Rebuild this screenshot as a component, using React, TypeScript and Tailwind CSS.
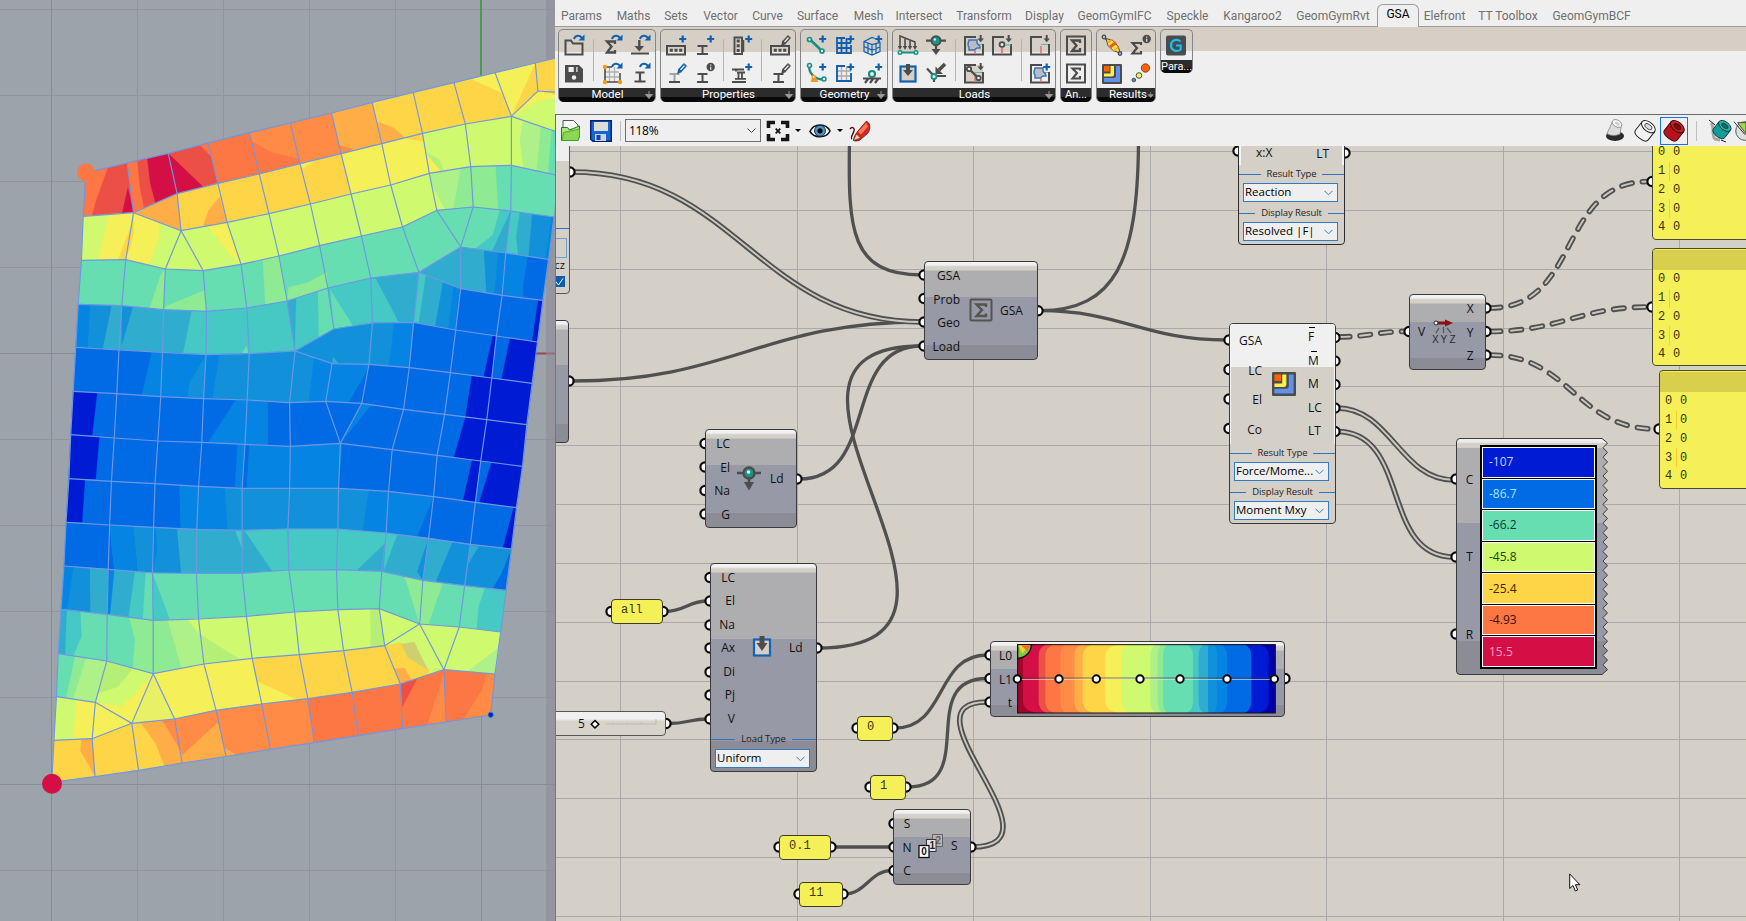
import type { ReactNode } from "react";

/* ---------- analysis mesh ---------- */

const C = {
  b0: "#001bd4", b1: "#006be4", b2: "#0684e4", b3: "#1291da", b4: "#30adce",
  t1: "#46c8c4", t2: "#66deb2", g1: "#8eeb94", g2: "#adf188", g3: "#cff96f", g4: "#b6ef76",
  y1: "#f6f058", y2: "#ffd548", o1: "#ffae47", o2: "#ff8b47", o3: "#fc7744", r1: "#ec4f46", r2: "#d40f46",
};

const FACES: [string, string][] = [
  [C.o3, "240,398 356,369 374,518 233,529"],
  [C.r1, "302,384 356,369 374,518 258,527 268,485"],
  [C.r2, "358,443 374,518 342,520"],
  [C.r2, "356,369 471,340 496,461 374,518"],
  [C.r1, "356,369 412,356 420,430 435,490 374,518"],
  [C.o3, "356,369 384,362 391,440 403,504 374,518"],
  [C.r1, "471,340 583,309 610,430 496,461"],
  [C.r2, "471,340 570,442 496,461"],
  [C.o3, "560,316 583,309 592,350"],
  [C.o3, "583,309 698,278 726,402 610,430"],
  [C.o2, "698,278 813,249 840,371 726,402"],
  [C.o3, "704,303 762,338 838,357 840,371 726,402"],
  [C.o2, "813,249 928,219 955,341 840,371"],
  [C.o1, "928,219 1042,187 1069,311 955,341"],
  [C.o2, "947,315 990,328 955,341"],
  [C.y2, "1042,187 1157,157 1271,128 1386,98 1432,229 1303,252 1183,280 1069,311"],
  [C.o1, "1058,246 1100,262 1133,292 1069,311"],
  [C.y1, "1320,117 1386,98 1405,158"],
  [C.y1, "1386,98 1499,69 1506,153 1432,229"],
  [C.y2, "1499,69 1506,153 1432,229"],
  [C.y2, "1499,69 1560,53 1560,157 1506,153"],
  [C.g3, "1506,153 1560,157 1560,276 1432,229"],
  [C.y1, "1506,153 1560,157 1560,170 1500,186 1432,229"],
  [C.y2, "1520,155 1560,157 1560,166"],

  [C.g3, "233,529 374,518 352,659 228,661"],
  [C.y1, "305,523 374,518 352,659 274,661"],
  [C.y2, "366,560 352,659 330,660"],
  [C.g3, "374,518 507,572 463,687 352,659"],
  [C.y1, "374,518 445,548 445,590 418,675 352,659"],
  [C.y2, "374,518 374,580 365,620 352,659"],
  [C.o1, "374,518 496,461 507,572"],
  [C.y2, "496,461 610,430 636,547 507,572"],
  [C.o1, "615,470 636,547 568,560 584,510"],
  [C.g3, "507,572 463,687 569,692"],
  [C.g3, "507,572 636,547 675,673 569,692"],
  [C.y1, "582,558 636,547 675,673 650,650"],
  [C.y2, "610,430 726,402 840,371 955,341 983,462 869,492 753,521 636,547"],
  [C.y1, "840,371 885,360 848,385"],
  [C.y1, "955,341 1069,311 1183,280 1202,400 1094,435 983,462"],
  [C.g3, "1183,280 1303,252 1432,229 1432,376 1318,380 1202,400"],
  [C.y2, "1130,293 1183,280 1186,305"],
  [C.g4, "1190,335 1232,360 1242,393 1202,400"],
  [C.y1, "1190,335 1215,370 1235,393 1202,400"],
  [C.g2, "1432,229 1560,276 1560,406 1432,376"],
  [C.g3, "1432,229 1465,241 1455,300 1465,384 1432,376"],
  [C.g1, "1515,258 1560,276 1560,406 1503,393"],
  [C.t2, "1545,268 1560,276 1560,406 1535,400"],

  [C.g3, "636,547 753,521 869,492 983,462 1094,435 1202,400 1223,511 1127,561 1012,588 895,617 781,648 675,673"],
  [C.g2, "1202,400 1318,380 1325,501 1223,511"],
  [C.g3, "1207,430 1245,508 1223,511"],
  [C.g1, "1290,384 1318,380 1325,501 1270,505"],
  [C.g1, "1318,380 1432,376 1430,513 1325,501"],
  [C.t2, "1388,378 1432,376 1430,513 1395,509"],
  [C.t2, "1432,376 1560,406 1551,531 1430,513"],

  [C.t2, "228,661 352,659 463,687 569,692 675,673 781,648 895,617 1012,588 1127,561 1223,511 1325,501 1430,513 1551,531 1536,658 1416,639 1290,621 1173,697 1038,714 918,744 804,783 691,804 578,814 458,809 341,797 219,793"],
  [C.g1, "463,687 450,705 418,806 458,809"],
  [C.g1, "575,750 578,814 458,809 465,798"],
  [C.g1, "736,660 781,648 804,783 743,794"],
  [C.g1, "915,697 918,744 804,783 808,742 860,728"],
  [C.t1, "1400,510 1430,513 1416,639 1330,626 1380,585"],
  [C.b4, "1430,513 1416,639 1378,633"],
  [C.b4, "1430,513 1551,531 1536,658 1416,639"],
  [C.t1, "1430,513 1455,517 1445,590 1450,643 1416,639"],
  [C.b3, "1490,522 1551,531 1536,658 1480,649"],
  [C.b2, "1545,530 1551,531 1536,658 1528,657"],

  [C.b4, "1173,697 1290,621 1290,746"],
  [C.b4, "1290,621 1416,639 1406,766 1290,746"],
  [C.b3, "1355,630 1416,639 1406,766 1362,758"],
  [C.b2, "1395,638 1416,639 1406,766 1385,760"],
  [C.b2, "1416,639 1536,658 1520,781 1406,766"],
  [C.b1, "1478,650 1536,658 1520,781 1465,773 1465,735"],

  [C.b3, "219,793 341,797 333,930 212,922"],
  [C.b2, "219,793 252,795 245,924 212,922"],
  [C.b4, "313,796 341,797 333,930 288,927"],
  [C.b4, "341,797 458,809 455,937 333,930"],
  [C.b3, "341,797 372,800 341,915"],
  [C.b4, "458,809 578,814 577,944 455,937"],
  [C.t1, "537,812 578,814 577,944 513,940"],
  [C.t1, "578,814 691,804 804,783 826,933 698,941 577,944"],
  [C.t2, "690,918 698,941 677,939"],
  [C.t1, "804,783 918,744 935,867 826,933"],
  [C.b4, "804,783 829,775 826,890 826,933"],
  [C.t2, "890,754 918,744 935,867 893,893"],
  [C.t1, "918,744 1038,714 1043,849 935,867"],
  [C.t2, "925,750 988,857 935,867"],
  [C.b4, "1038,714 1173,697 1158,847 1043,849"],
  [C.t1, "1038,714 1052,716 1117,848 1043,849"],
  [C.b3, "1173,697 1290,746 1276,870 1158,847"],
  [C.b4, "1173,697 1240,725 1218,858 1158,847"],
  [C.t1, "1173,697 1192,706 1172,850 1158,847"],
  [C.b2, "1270,740 1290,746 1276,870 1255,866"],

  [C.b1, "212,922 333,930 455,937 577,944 698,941 826,933 935,867 1043,849 1158,847 1276,870 1290,746 1406,766 1520,781 1505,906 1432,1527 1317,1513 1200,1495 1081,1479 946,1467 806,1467 678,1471 551,1468 430,1462 307,1455 185,1447"],
  [C.b0, "1507,780 1520,781 1505,906 1490,903"],
  [C.b2, "425,935 577,944 570,1076 397,1067"],
  [C.b3, "577,944 570,1076 525,1074 530,1030"],
  [C.b2, "577,944 698,941 692,1080 570,1076"],
  [C.b3, "615,943 698,941 826,933 811,1088 692,1080 595,1077"],
  [C.b3, "826,933 930,971 912,1084 811,1088"],
  [C.b2, "880,952 930,971 912,1084 865,1086"],
  [C.b3, "826,933 935,867 1043,849 1033,973 930,971"],
  [C.b4, "933,950 947,970 930,971"],
  [C.b2, "930,971 1033,973 1013,1090 912,1084"],
  [C.b1, "1033,985 1013,1090 975,1088"],
  [C.b3, "1043,849 1158,847 1146,983 1033,973"],
  [C.b2, "1105,848 1158,847 1146,983 1088,978"],
  [C.b0, "1380,888 1390,888 1377,1014 1354,1010"],
  [C.b0, "1428,895 1505,906 1490,1030 1404,1018"],
  [C.b0, "1321,1008 1377,1014 1490,1030 1475,1154 1463,1279 1346,1263 1271,1252 1303,1132"],
  [C.b0, "1322,1261 1346,1263 1331,1387 1297,1380"],
  [C.b1, "1346,1265 1374,1270 1340,1387 1331,1387"],
  [C.b0, "1376,1268 1463,1279 1446,1403 1342,1387"],
  [C.b0, "1438,1403 1446,1403 1432,1527 1408,1523"],
  [C.b0, "205,1054 272,1059 258,1186 198,1184"],
  [C.b0, "198,1184 278,1190 268,1317 193,1316"],
  [C.b0, "193,1316 238,1320 230,1447 185,1447"],
  [C.b2, "660,1080 750,1083 750,1216 582,1208"],
  [C.b2, "1013,1090 1040,1094 953,1210"],
  [C.b2, "665,1212 813,1219 953,1210 958,1215 948,1345 658,1343"],
  [C.b1, "685,1215 697,1216 690,1345 678,1345"],
  [C.b2, "503,1335 678,1345 948,1345 1088,1354 1214,1370 1168,1490 1081,1479 946,1467 678,1471 505,1466"],
  [C.b3, "630,1342 678,1345 811,1345 948,1345 1033,1350 1015,1473 946,1467 806,1467 678,1471 637,1470"],

  [C.b4, "307,1455 430,1462 551,1468 678,1471 806,1467 946,1467 1081,1479 1200,1495 1317,1513 1432,1527 1417,1651 1301,1637 1184,1621 1069,1594 942,1589 809,1590 678,1600 550,1600 427,1599 303,1588"],
  [C.b1, "185,1447 307,1455 320,1588 303,1588 179,1578"],
  [C.b2, "307,1455 375,1459 387,1595 320,1590"],
  [C.b3, "375,1459 495,1466 507,1600 387,1595"],
  [C.b2, "428,1462 436,1462 440,1530 427,1599"],
  [C.t1, "684,1471 806,1467 946,1467 1081,1479 1078,1510 1000,1589 809,1590 762,1592"],
  [C.t1, "658,1471 676,1471 680,1530"],
  [C.t1, "1081,1479 1112,1484 1075,1590"],
  [C.b3, "1200,1495 1184,1621 1168,1595"],
  [C.b3, "1267,1507 1317,1513 1432,1527 1417,1651 1301,1637 1220,1625"],
  [C.b4, "1317,1516 1340,1520 1312,1570"],
  [C.b1, "1432,1527 1417,1651 1380,1645 1405,1600"],

  [C.t2, "179,1578 303,1588 427,1599 550,1600 678,1600 809,1590 942,1589 1069,1594 1184,1621 1301,1637 1417,1651 1402,1776 1286,1761 1175,1752 1062,1706 946,1709 825,1716 690,1729 556,1737 429,1741 300,1723 171,1708"],
  [C.b3, "179,1578 303,1588 300,1723 171,1708"],
  [C.b2, "179,1578 205,1580 188,1710 171,1708"],
  [C.b4, "252,1584 303,1588 300,1723 253,1717"],
  [C.b4, "303,1588 427,1599 429,1741 300,1723"],
  [C.b2, "303,1588 320,1590 308,1724 300,1723"],
  [C.t1, "378,1595 427,1599 429,1741 360,1730"],
  [C.t2, "408,1597 427,1599 427,1740 400,1737"],
  [C.t1, "427,1599 475,1738 429,1741"],
  [C.g1, "1133,1610 1184,1621 1240,1628 1200,1752 1175,1752"],
  [C.t1, "1358,1645 1417,1651 1402,1776 1335,1768 1340,1700"],

  [C.t2, "171,1708 300,1723 429,1741 429,1901 299,1863 163,1841"],
  [C.t1, "171,1708 225,1714 228,1790 205,1848 163,1841"],
  [C.b4, "171,1708 187,1710 182,1843 163,1841"],
  [C.g1, "362,1732 429,1741 429,1901 372,1885 378,1800"],
  [C.g1, "429,1741 556,1737 571,1872 429,1901"],
  [C.g2, "470,1740 556,1737 571,1872 508,1885"],
  [C.g3, "525,1738 556,1737 562,1790"],
  [C.g3, "556,1737 690,1729 825,1716 946,1709 1062,1706 1175,1752 1077,1817 962,1832 838,1844 706,1855 571,1872"],
  [C.g4, "556,1780 670,1857 571,1872"],
  [C.g4, "1037,1707 1062,1706 1077,1817 1038,1822"],
  [C.g3, "1175,1752 1286,1761 1402,1776 1386,1902 1243,1889"],
  [C.g4, "1160,1765 1178,1755 1198,1798 1170,1785"],
  [C.g2, "1398,1822 1386,1902 1308,1896"],

  [C.g1, "163,1841 299,1863 267,1987 158,1970"],
  [C.t2, "163,1841 210,1848 185,1972 158,1970"],
  [C.g2, "240,1856 299,1863 267,1987 205,1978"],
  [C.g3, "299,1863 429,1901 369,2050 267,1987"],
  [C.g4, "299,1863 371,1886 330,1940 275,1960"],
  [C.y1, "429,1901 369,2050 267,1987 340,2000 375,1965"],
  ["#e8f065", "429,1901 489,2037 369,2050"],
  [C.y1, "429,1901 571,1872 706,1855 733,1992 605,2011 489,2037"],
  [C.y2, "706,1855 838,1844 962,1832 1077,1817 1121,1932 986,1957 862,1976 733,1992"],
  [C.y1, "722,1925 832,1979 733,1992"],
  [C.g3, "1077,1817 1175,1752 1243,1889 1121,1932"],
  [C.y2, "1077,1817 1125,1808 1140,1850 1203,1888 1200,1905 1121,1932"],
  ["#d0cf70", "1125,1812 1160,1806 1198,1890 1140,1850"],
  [C.o1, "1105,1886 1133,1884 1152,1920 1121,1932"],

  [C.g3, "158,1970 267,1987 258,2096 151,2101"],
  [C.y1, "215,1980 267,1987 369,2050 258,2096 205,2098"],
  [C.y2, "151,2101 258,2096 369,2050 388,2191 266,2210 145,2227"],
  [C.o1, "228,2098 258,2096 266,2210 225,2132"],
  [C.o1, "369,2050 489,2037 605,2011 633,2150 510,2169 388,2191"],
  [C.y2, "369,2050 395,2050 435,2110 460,2178 388,2191"],
  [C.o2, "455,2041 489,2037 510,2140"],
  [C.o2, "489,2037 605,2011 612,2045 510,2145"],
  [C.o2, "605,2011 733,1992 862,1976 880,2108 757,2128 633,2150"],
  [C.o1, "630,2125 660,2144 633,2150"],
  [C.o3, "862,1976 986,1957 1121,1932 1243,1889 1386,1902 1374,2025 1249,2046 1127,2066 1003,2087 880,2108"],
  [C.r1, "1121,1932 1168,1916 1127,2000"],
  [C.o2, "1243,1900 1249,2046 1197,2054"],
  [C.o2, "1362,1900 1386,1902 1374,2025 1297,2038 1350,1950"],
];

const EDGES = [
  "M240 398L356 369 471 340 583 309 698 278 813 249 928 219 1042 187 1157 157 1271 128 1386 98 1499 69 1560 53",
  "M240 398L233 529 228 661 219 793 212 922 205 1054 198 1184 193 1316 185 1447 179 1578 171 1708 163 1841 158 1970 151 2101 145 2227",
  "M145 2227L266 2210 388 2191 510 2169 633 2150 757 2128 880 2108 1003 2087 1127 2066 1249 2046 1374 2025",
  "M1551 531L1536 658 1520 781 1505 906 1490 1030 1475 1154 1463 1279 1446 1403 1432 1527 1417 1651 1402 1776 1386 1902 1374 2025",
  "M233 529L374 518 496 461 610 430 726 402 840 371 955 341 1069 311 1183 280 1303 252 1432 229 1506 153 1560 157",
  "M374 518L507 572 636 547 753 521 869 492 983 462 1094 435 1202 400 1318 380 1432 376 1560 406M1432 229L1560 276",
  "M228 661L352 659 463 687 569 692 675 673 781 648 895 617 1012 588 1127 561 1223 511 1325 501 1430 513 1551 531",
  "M219 793L341 797 458 809 578 814 691 804 804 783 918 744 1038 714 1173 697 1290 621 1416 639 1536 658",
  "M1173 697L1290 746 1406 766 1520 781",
  "M212 922L333 930 455 937 577 944 698 941 826 933 935 867 1043 849 1158 847 1276 870 1390 888 1505 906",
  "M826 933L930 971 1033 973 1146 983 1261 998 1377 1014 1490 1030",
  "M205 1054L327 1061 450 1070 570 1076 692 1080 811 1088 912 1084 1013 1090 1130 1108 1245 1123 1363 1139 1475 1154",
  "M198 1184L320 1194 442 1203 565 1207 686 1213 813 1219 953 1210 1098 1229 1224 1246 1346 1263 1463 1279",
  "M193 1316L312 1324 434 1331 556 1339 678 1345 811 1345 948 1345 1088 1354 1214 1370 1331 1387 1446 1403",
  "M185 1447L307 1455 430 1462 551 1468 678 1471 806 1467 946 1467 1081 1479 1200 1495 1317 1513 1432 1527",
  "M179 1578L303 1588 427 1599 550 1600 678 1600 809 1590 942 1589 1069 1594 1184 1621 1301 1637 1417 1651",
  "M171 1708L300 1723 429 1741 556 1737 690 1729 825 1716 946 1709 1062 1706 1175 1752 1286 1761 1402 1776",
  "M163 1841L299 1863 429 1901 571 1872 706 1855 838 1844 962 1832 1077 1817 1175 1752 1243 1889 1386 1902",
  "M158 1970L267 1987 369 2050 489 2037 605 2011 733 1992 862 1976 986 1957 1121 1932 1243 1889 1286 1761",
  "M151 2101L258 2096 369 2050",
  "M356 369L374 518 352 659 341 797 333 930 327 1061 320 1194 312 1324 307 1455 303 1588 300 1723 299 1863 267 1987 258 2096 266 2210",
  "M471 340L496 461 507 572 463 687 458 809 455 937 450 1070 442 1203 434 1331 430 1462 427 1599 429 1741 429 1901 369 2050 388 2191",
  "M507 572L569 692 578 814 577 944 570 1076 565 1207 556 1339 551 1468 550 1600 556 1737 571 1872 605 2011 633 2150",
  "M429 1901L489 2037 510 2169",
  "M583 309L610 430 636 547 675 673 691 804 698 941 692 1080 686 1213 678 1345 678 1471 678 1600 690 1729 706 1855 733 1992 757 2128",
  "M698 278L726 402 753 521 781 648 804 783 826 933 811 1088 813 1219 811 1345 806 1467 809 1590 825 1716 838 1844 862 1976 880 2108",
  "M813 249L840 371 869 492 895 617 918 744 935 867M930 971L912 1084 953 1210 948 1345 946 1467 942 1589 946 1709 962 1832 986 1957 1003 2087",
  "M928 219L955 341 983 462 1012 588 1038 714 1043 849 1033 973 1013 1090 953 1210",
  "M1042 187L1069 311 1094 435 1127 561 1173 697 1158 847 1146 983 1130 1108 1098 1229 1088 1354 1081 1479 1069 1594 1062 1706 1077 1817 1121 1932 1127 2066",
  "M1157 157L1183 280 1202 400 1223 511 1290 621 1290 746 1276 870 1261 998 1245 1123 1224 1246 1214 1370 1200 1495 1184 1621 1175 1752",
  "M1271 128L1303 252 1318 380 1325 501 1290 621",
  "M1386 98L1432 229 1432 376 1430 513 1416 639 1406 766 1390 888 1377 1014 1363 1139 1346 1263 1331 1387 1317 1513 1301 1637 1286 1761",
  "M1499 69L1506 153M1243 1889L1249 2046",
];

function Viewport() {
  return (
    <div className="relative h-[921px] w-[555px] shrink-0 overflow-hidden bg-[#9da3aa]">
      <svg width="555" height="921" className="block">
        <g stroke="#9494a0" strokeWidth="1">
          {[137.5, 223.5, 309.5, 395.5].map((x) => <path key={x} d={`M${x} 0V921`} />)}
          {[9.5, 95.5, 181.5, 267.5, 439.5, 525.5, 611.5, 697.5, 870.5].map((y) => <path key={y} d={`M0 ${y}H555`} />)}
        </g>
        <path d="M51.5 0V921M481.5 0V921M0 353.5H555M0 784.5H555" stroke="#888a95" />
        <path d="M481 0V80" stroke="#4a9a4c" strokeWidth="2" />
        <path d="M530 353.5H555" stroke="#9c4448" strokeWidth="2" />
        <rect x="546" y="0" width="9" height="921" fill="#8d8c98" opacity=".6" />
        <g transform="translate(0 40) scale(.357143 .333333)">
          {FACES.map(([fill, points], i) => (
            <polygon key={i} points={points} fill={fill} stroke={fill} strokeWidth=".6" />
          ))}
          <g fill="none" stroke="#6f97e4" strokeWidth="1.15">
            {EDGES.map((d, i) => <path key={i} d={d} vectorEffect="non-scaling-stroke" />)}
          </g>
        </g>
        <circle cx="86" cy="172.5" r="9" fill="#fc7744" />
        <circle cx="52" cy="783.8" r="10" fill="#d40f46" />
        <circle cx="490.7" cy="714.8" r="2.6" fill="#001bd4" stroke="#1f8fb0" strokeWidth=".8" />
      </svg>
    </div>
  );
}

/* ---------- ribbon icons ---------- */

const D = "#4c4c4c";
const B = "#0f60ae";
const T = "#189080";

const Ic = ({ children }: { children: ReactNode }) => (
  <svg width="28" height="28" viewBox="0 0 28 28" fill="none" stroke={D} strokeWidth="2" className="block shrink-0">{children}</svg>
);
const Plus = () => <path d="M20.700 3.500v7M17.200 7h7" stroke={B} strokeWidth="2.200" />;
const Turn = () => (
  <>
    <path d="M14 7c1-4 6-4.500 8-1" stroke={B} strokeWidth="2" />
    <path d="M24.500 2.500v6h-6z" fill={B} stroke="none" />
  </>
);
const Pencil = ({ c = D }: { c?: string }) => (
  <>
    <path d="M17 9.500l5-5.500 2 2-5 5.500z" stroke={c} strokeWidth="1.400" fill="#e8e8e8" />
    <path d="M16.500 8.500l3.500 3.500-5 2z" fill={c} stroke="none" />
  </>
);
const Beam = ({ top = D }: { top?: string }) => (
  <>
    <path d="M7.500 14h10M12.500 14v8" stroke={top} />
    <path d="M7 22h11" />
  </>
);
const Info = () => (
  <>
    <circle cx="20.700" cy="7" r="4.200" fill={D} stroke="none" />
    <path d="M20.700 4.500v1.200M20.700 6.700v3" stroke="#ddd" strokeWidth="1.300" />
  </>
);
const DownMark = () => (
  <>
    <path d="M20.700 3v4" stroke={D} />
    <path d="M17.500 6.500h6.400l-3.200 3.800z" fill={D} stroke="none" />
  </>
);
const DotBox = () => (
  <>
    <rect x="5" y="14" width="18" height="8.500" />
    <path d="M7.800 18.200h3M12.500 18.200h3M17.200 18.200h3" strokeWidth="3" />
  </>
);
const CaseFrame = () => <path d="M16 5H5v17.500h18V12" strokeWidth="2" />;

const iModel = [
  <Ic><path d="M5.500 22V8.500h5.500l2 3h9.500V22.500H5.500z" /><Turn /></Ic>,
  <Ic><path d="M5 5h14l4 4v13.500H5z" fill={D} stroke="none" /><path d="M8.500 7h9v5h-9z" fill="#eee" stroke="none" /><circle cx="14" cy="17.500" r="2.200" fill="#eee" stroke="none" /><path d="M15 7v5" strokeWidth="2.500" /></Ic>,
];
const iModel2 = [
  <Ic><path d="M17 12V9.500H9l4.500 5L9 20.500h8V18" strokeWidth="2.300" /><Turn /></Ic>,
  <Ic><path d="M7 12h14M7 17h14M11.500 7v15M16.500 7v15" stroke="#b0b0b0" strokeWidth="1.300" /><path d="M7 7v15h15v-9M7 7h7" strokeWidth="1.600" /><g fill="#f09a1a" stroke="none"><circle cx="7" cy="7" r="2.200" /><circle cx="7" cy="22" r="2.200" /><circle cx="22" cy="22" r="2.200" /></g><Turn /></Ic>,
  <Ic><path d="M13.300 8v7" strokeWidth="2.400" /><path d="M8.500 14h9.600l-4.800 5.500z" fill={D} stroke="none" /><path d="M5 21.500h18" /><Turn /></Ic>,
  <Ic><path d="M9.500 12.500h9M14 12.500V21M8.500 21.500h11" strokeWidth="2.200" /><Turn /></Ic>,
];
const iProp = [
  <Ic><DotBox /><Plus /></Ic>,
  <Ic><Beam top="#a4a4a8" /><Pencil c={B} /></Ic>,
  <Ic><Beam /><Plus /></Ic>,
  <Ic><Beam /><Info /></Ic>,
];
const iProp2 = [
  <Ic><path d="M14 5.500H6.500v16.500H14z" strokeWidth="1.900" /><path d="M15.500 8v12" strokeWidth="1.500" /><path d="M10.200 7.500v3M10.200 12.300v3M10.200 17v3" strokeWidth="3" /><Plus /></Ic>,
  <Ic><path d="M4 9.500h12M4 22h14M9 12.500h8M8 9.500v2M10.500 13v5.500M14 13v5.500M7 18.800H18" strokeWidth="1.800" /><Plus /></Ic>,
];
const iProp3 = [<Ic><DotBox /><Pencil /></Ic>, <Ic><Beam /><Pencil /></Ic>];
const iGeo = [
  <Ic><path d="M8 7.500L20 19" stroke={T} strokeWidth="2.600" /><circle cx="7.500" cy="7.500" r="2" stroke={T} fill="#eee" strokeWidth="1.700" /><circle cx="20" cy="19" r="2" stroke={T} fill="#eee" strokeWidth="1.700" /><Plus /></Ic>,
  <Ic><path d="M7.500 5C6 12 12 20 22 19.500" stroke={T} strokeWidth="2.300" /><circle cx="7.500" cy="5.500" r="2" stroke={T} fill="#eee" strokeWidth="1.500" /><circle cx="22" cy="19" r="2" stroke={T} fill="#eee" strokeWidth="1.500" /><path d="M11.500 14l5 8h-8z" fill="#f09a1a" stroke="none" /><circle cx="11.700" cy="17" r="1.600" fill="#eee" stroke="#f09a1a" strokeWidth="1.200" /><Plus /></Ic>,
  <Ic><path d="M15 6H7v15h14v-8M7 11h14M7 16h14M11.500 6v15M16.500 6v15" stroke={B} strokeWidth="1.800" /><Plus /></Ic>,
  <Ic><path d="M7 11h14M7 16h14M11.500 6v15M16.500 6v15" stroke="#aaa" strokeWidth="1.300" /><path d="M15 6H7v15h14v-8" stroke={B} strokeWidth="1.900" /><Plus /></Ic>,
  <Ic><path d="M6 9.500l8-4 3 1M6 9.500l8 3 8-2v9l-8 3.500-8-3.500zM14 12.500V23M6 14.500l8 3.500 8-3M10 11v10.500M18 11.500v10" stroke={B} strokeWidth="1.200" /><Plus /></Ic>,
  <Ic><circle cx="14" cy="14" r="3" stroke={T} strokeWidth="2.200" /><path d="M5 18.500h18M10 19l-3 4M15 19l-3 4M20 19l-3 4" strokeWidth="2.200" /><Plus /></Ic>,
];
const iLoad = [
  <Ic><path d="M6 16V4l15 6v6M11 16V7M16 16V8" strokeWidth="1.600" /><path d="M3.800 14h4.400L6 18zM8.800 14h4.400L11 18zM13.800 14h4.400L16 18zM18.800 14h4.400L21 18z" fill={D} stroke="none" /><path d="M6 20.500h16" stroke={T} /><circle cx="6" cy="20.500" r="1.800" stroke={T} fill="#eee" strokeWidth="1.400" /><circle cx="22" cy="20.500" r="1.800" stroke={T} fill="#eee" strokeWidth="1.400" /></Ic>,
  <Ic><rect x="6.500" y="6.500" width="15" height="15" fill="#d4d0c8" stroke={B} strokeWidth="2.200" /><path d="M14 4v7" strokeWidth="4" /><path d="M9 10h10l-5 6z" fill={D} stroke="none" /></Ic>,
  <Ic><path d="M4 8.700h20M14 13v5" strokeWidth="2.300" /><circle cx="14" cy="8.700" r="4.500" fill="#14988a" strokeWidth="1.900" /><circle cx="12.800" cy="7.500" r="1.200" fill="#c8f4ee" stroke="none" /><path d="M9.500 17h9L14 23z" fill={D} stroke="none" /></Ic>,
  <Ic><path d="M5 8.500l7 7.500h12M12 16v6" strokeWidth="2.200" /><path d="M23 4l-6 6" strokeWidth="3.500" /><path d="M13.500 6.500v7.500H21z" fill={D} stroke="none" /><circle cx="12" cy="16.500" r="2.500" stroke={T} fill="#eee" strokeWidth="1.800" /></Ic>,
];
const Patch = () => <path d="M9 8h8v3c1 2 3 2 3 5h-3l-3 2H9v-3c-2-2-1-4 0-7z" fill="#b8bcc4" stroke="#3d74b8" strokeWidth="1.500" />;
const Axes = () => <><path d="M15 22v-8" stroke="#e08080" strokeWidth="1.800" /><path d="M15 12.500h7" stroke="#4ec0b0" strokeWidth="1.200" /></>;
const iLoad2 = [
  <Ic><CaseFrame /><Axes /><Patch /><DownMark /></Ic>,
  <Ic><rect x="5" y="5" width="18" height="17.500" fill="#d4d0c8" stroke="none" /><CaseFrame /><Axes /><path d="M9.500 9.500l9 8.500" strokeWidth="2.400" /><circle cx="9" cy="9" r="2.200" fill="#eee" strokeWidth="1.800" /><circle cx="18.500" cy="18" r="2.200" fill="#eee" strokeWidth="1.800" /><DownMark /></Ic>,
  <Ic><CaseFrame /><path d="M14 22v-7" stroke="#e08080" strokeWidth="2.200" /><path d="M17 13h6" stroke="#4ec0b0" strokeWidth="1.200" /><circle cx="14" cy="12.500" r="2.400" fill="#eee" strokeWidth="1.800" /><DownMark /></Ic>,
];
const iLoad3 = [
  <Ic><CaseFrame /><Axes /><DownMark /></Ic>,
  <Ic><CaseFrame /><Axes /><Patch /><Plus /></Ic>,
];
const SigmaBox = ({ flip }: { flip?: boolean }) => (
  <Ic><rect x="5" y="4.500" width="18" height="18" strokeWidth="2" />{flip ? <path d="M18 10.500V8.500h-7.500l4.500 4.500-4.500 5.500H18V16" strokeWidth="2.100" /> : <path d="M18 11V8.500h-8l4.500 5-4.500 5.500h8V16" strokeWidth="2.300" />}</Ic>
);
const Contour = () => (
  <>
    <rect x="4" y="4" width="20" height="20" rx="1" fill={D} stroke="none" />
    <path d="M6 18h9.500c2 0 2.500-1 2.500-2.500V6h4v16H6z" fill="#6390ea" stroke="none" />
    <path d="M6 13.500h6.500V6H16v8.500q0 2-2 2H6z" fill="#f8f04c" stroke="none" />
    <rect x="6" y="6" width="5.500" height="5.500" fill="#ff6000" stroke="none" />
  </>
);
const iRes = [
  <Ic><path d="M5.500 5l17 17" strokeWidth="1.500" /><path d="M8 6.500l7 2 5.500 6.500 1.500 6-7-2.500-5-5z" fill="#f8e04c" strokeWidth="1" /><path d="M9.500 10.500l5-3M15.500 19l5-4" stroke="#f8a020" strokeWidth="1.500" /><path d="M12 15l6-4.500" stroke="#ef5a1a" strokeWidth="3" /><circle cx="6" cy="5" r="1.800" fill="#b8b8b8" strokeWidth="1.200" /><circle cx="22" cy="21.500" r="1.800" fill="#7aa6ef" strokeWidth="1.200" /></Ic>,
  <Ic><Contour /></Ic>,
  <Ic><path d="M15 13V11H6.500l4.500 5-4.500 5.500H15V19" strokeWidth="2.200" /><Info /></Ic>,
  <Ic><circle cx="19.500" cy="8" r="4.200" fill="#ff6000" strokeWidth=".9" /><circle cx="13" cy="15.500" r="2.800" fill="#f8f04c" strokeWidth="1" /><circle cx="7.800" cy="20" r="1.800" fill="#4b86cf" strokeWidth="1" /></Ic>,
];

const Cells = ({ cols, icons }: { cols: string; icons: ReactNode[] }) => (
  <div className={`grid grid-flow-col grid-rows-2 ${cols}`}>
    {icons.map((ic, i) => <div key={i} className="h-7 w-7">{ic}</div>)}
  </div>
);
const Sep = () => <div className="mt-[7px] h-[42px] w-[10px] shrink-0"><div className="mx-auto h-full w-px bg-[#b4b4b6]" /></div>;

function Group({ w, title, arrow = true, small, children }: { w: string; title: string; arrow?: boolean; small?: boolean; children: ReactNode }) {
  return (
    <div className={`flex shrink-0 flex-col overflow-hidden rounded-[5px] border-x border-t border-[#85858a] bg-linear-to-b from-[#d5cfc6] ${small ? "h-11 from-50% to-50%" : "h-[73px] from-[30%] to-[30%]"} to-[#efefef] ${w}`}>
      <div className={`flex pl-px ${small ? "h-[30px]" : "h-[58px]"} pt-[2px]`}>{children}</div>
      <div className={`flex min-h-0 flex-1 items-center bg-linear-to-b from-[#2c2c2c] from-65% to-[#080808] to-65% pb-px leading-none text-white ${arrow ? "text-[11.5px]" : "text-[11px]"}`}>
        <span className={`flex-1 whitespace-nowrap text-center ${arrow ? "pl-3" : ""}`}>{title}</span>
        {arrow && (
          <svg width="11" height="8" viewBox="0 0 11 8"><path d="M5 0v4M1.500 3.500h7L5 7.500z" fill="#999" stroke="#999" strokeWidth="1" /></svg>
        )}
      </div>
    </div>
  );
}

const TABS: [string, string][] = [
  ["Params", "w-[53px]"], ["Maths", "w-[51px]"], ["Sets", "w-[34px]"], ["Vector", "w-[55px]"],
  ["Curve", "w-[39px]"], ["Surface", "w-[61px]"], ["Mesh", "w-[41px]"], ["Intersect", "w-[60px]"],
  ["Transform", "w-[70px]"], ["Display", "w-[51px]"], ["GeomGymIFC", "w-[89px]"], ["Speckle", "w-[57px]"],
  ["Kangaroo2", "w-[73px]"], ["GeomGymRvt", "w-[88px]"], ["GSA", "w-[42px]"], ["Elefront", "w-[51px]"],
  ["TT Toolbox", "w-[76px]"], ["GeomGymBCF", "w-[91px]"],
];

function Ribbon() {
  return (
    <>
      <div className="flex h-[27px] border-b border-[#9c9c9e] bg-[#efefef] font-['Roboto',sans-serif] text-[12px] text-[#6f6f6f]">
        {TABS.map(([name, w]) =>
          name === "GSA" ? (
            <div key={name} className={`${w} relative z-10 mt-1 h-[23px] shrink-0 rounded-t-md border-x border-t border-[#9c9c9e] bg-[#efefef] pt-px text-center leading-[17px] text-black`}>{name}</div>
          ) : (
            <div key={name} className={`${w} flex shrink-0 items-center justify-center whitespace-nowrap pt-[5px]`}>{name}</div>
          ),
        )}
      </div>
      <div className="h-[87px] bg-linear-to-b from-[#d5cfc6] from-[24px] to-[#efefef] to-[24px]">
        <div className="flex items-start gap-[4px] pl-[3px] pt-[2px] font-['Roboto',sans-serif]">
          <Group w="w-[98px]" title="Model">
            <Cells cols="grid-cols-1" icons={iModel} /><Sep /><Cells cols="grid-cols-2" icons={iModel2} />
          </Group>
          <Group w="w-[136px]" title="Properties">
            <Cells cols="grid-cols-2" icons={iProp} /><Sep /><Cells cols="grid-cols-1" icons={iProp2} /><Sep /><Cells cols="grid-cols-1" icons={iProp3} />
          </Group>
          <Group w="w-[88px]" title="Geometry"><Cells cols="grid-cols-3" icons={iGeo} /></Group>
          <Group w="w-[164px]" title="Loads">
            <Cells cols="grid-cols-2" icons={iLoad} /><Sep /><Cells cols="grid-cols-2" icons={iLoad2} /><Sep /><Cells cols="grid-cols-1" icons={iLoad3} />
          </Group>
          <Group w="w-[32px]" title="An..." arrow={false}><Cells cols="grid-cols-1" icons={[<SigmaBox />, <SigmaBox flip />]} /></Group>
          <Group w="w-[60px]" title="Results"><Cells cols="grid-cols-2" icons={iRes} /></Group>
          <Group w="w-[33px]" title="Para..." arrow={false} small>
            <Ic><rect x="4" y="3.500" width="20" height="20" rx="2" fill="#484c50" stroke="none" /><path d="M18.500 9.500c-4-3.500-9.500-1-9.500 4s6 7 9.700 4v-4H14" stroke="#16c0f0" strokeWidth="2.200" /></Ic>
          </Group>
        </div>
      </div>
    </>
  );
}

/* ---------- canvas toolbar ---------- */

const Drum = ({ body, top, hole, line }: { body: string; top: string; hole: string; line: string }) => (
  <g transform="rotate(38 12 12)">
    <path d="M4 6.500v10.500c0 5.500 16 5.500 16 0V6.500" fill={body} stroke={line} />
    <ellipse cx="12" cy="6.500" rx="8" ry="4.600" fill={top} stroke={line} />
    <ellipse cx="12" cy="6.500" rx="4.200" ry="2.300" fill={hole} stroke={line} strokeWidth=".7" />
  </g>
);

const Caret = ({ m }: { m: string }) => <div className={`${m} h-0 w-0 border-x-[3px] border-t-[3px] border-x-transparent border-t-black`} />;

function Toolbar() {
  return (
    <div className="flex h-[32px] shrink-0 items-center border-l border-t border-[#6c6c6c] bg-[#efefef] pl-[5px]">
      <svg width="20" height="23" viewBox="0 0 20 23"><path d="M2 9V1.500h10.500L17 6v5" fill="#fafafa" stroke="#555" /><path d="M.5 21.500V8.500h6l2 2.500 10-4v10l-1.500 4.500z" fill="#aee77c" stroke="#1e7a1a" /><path d="M1 21.500l1.500-8L18.500 10v7l-1.500 4.500z" fill="#8ad852" stroke="#3c9a28" strokeWidth=".8" /></svg>
      <svg width="22" height="22" viewBox="0 0 22 22" className="ml-[9px]"><path d="M.7.7h20.600v20.600H3l-2.300-2z" fill="#1467cf" stroke="#0a1f6e" strokeWidth="1.400" /><rect x="4" y="2" width="14" height="9" fill="#dddcd8" /><rect x="5" y="14" width="11" height="7" fill="#c8d4e8" /><rect x="6.500" y="15" width="4" height="5" fill="#1b3f9a" /></svg>
      <div className="ml-[8px] h-[20px] w-px bg-[#bdbdbd]" />
      <div className="ml-[4px] flex h-[23px] w-[136px] items-center justify-between border border-[#707070] bg-[#efefef] pl-[3px] pr-[4px] font-['Open_Sans',sans-serif] text-[12px] leading-none tracking-[-0.3px] text-black">
        118%
        <svg width="9" height="6" viewBox="0 0 9 6" fill="none" stroke="#444"><path d="M.5.5l4 4 4-4" /></svg>
      </div>
      <svg width="24" height="22" viewBox="0 0 24 22" className="ml-[5px]" fill="none" stroke="#151515"><path d="M2.500 8V2.500H9M15 2.500h6.500V8M21.500 14v5.500H15M9 19.500H2.500V14" strokeWidth="3.600" /><path d="M9.700 8.700l4.600 4.600M14.300 8.700l-4.600 4.600" strokeWidth="1.800" /></svg>
      <Caret m="ml-[5px]" />
      <svg width="22" height="16" viewBox="0 0 23 16" className="ml-[8px]"><path d="M1 8.500C5-.5 18-.5 22 8 18 16 5 16 1 8.500z" fill="#fff" stroke="#111" strokeWidth="1.700" /><circle cx="11.500" cy="7.800" r="5.700" fill="#4a98c8" stroke="#124" /><circle cx="11.500" cy="7.800" r="2.700" fill="#000" /></svg>
      <Caret m="ml-[6px]" />
      <svg width="23" height="22" viewBox="0 0 23 22" className="ml-[6px]"><path d="M1 9c2-3 5-1 4 2s-4 7-2 8" fill="none" stroke="#501010" strokeWidth="1.400" /><path d="M17.500 1l3 3c1 4 0 7-2 9.500L11 20c-3 1.500-6 1-6.500.500 0-3 2-6 4-9z" fill="#d42820" stroke="#701010" strokeWidth=".8" /><path d="M17 3l-8 9 3 2.500 7-8z" fill="#ff7858" /><path d="M4.500 20.500l3-6.500 4 4z" fill="#f0d0a8" stroke="#502010" strokeWidth=".5" /></svg>

      <div className="ml-auto flex items-center">
        <svg width="22" height="24" viewBox="0 0 22 24" className="mb-[2px]"><ellipse cx="11" cy="18" rx="9" ry="5" fill="#2a2a2a" /><path d="M3 15.500L8.500 3.500l9 3.500-1.500 9c-4 2-10 2-13-.5z" fill="#dcdcdc" stroke="#888" strokeWidth=".8" /><ellipse cx="13" cy="5.500" rx="5.200" ry="3.400" transform="rotate(30 13 5.500)" fill="#f6f6f6" stroke="#888" strokeWidth=".8" /><ellipse cx="13.300" cy="5.500" rx="2.600" ry="1.600" transform="rotate(30 13 5.500)" fill="#cfcfcf" /></svg>
        <svg width="24" height="24" viewBox="0 0 24 24" className="ml-[7px]"><Drum body="#f2f2f2" top="#fafafa" hole="#dcdcdc" line="#222" /></svg>
        <div className="ml-[3px] flex h-[28px] w-[28px] items-center justify-center border border-[#1a72dc] bg-[#efefef]">
          <svg width="24" height="24" viewBox="0 0 24 24"><Drum body="#b8121e" top="#cc2026" hole="#7c0a10" line="#3c0408" /></svg>
        </div>
        <div className="ml-[8px] h-[20px] w-px bg-[#bdbdbd]" />
        <svg width="24" height="24" viewBox="0 0 24 24" className="ml-[11px]"><path d="M3 4c4 4 0 12 4 16l5 1" fill="none" stroke="#a8a8a8" strokeWidth="3" /><g transform="translate(3 0) scale(.9)"><Drum body="#129c98" top="#2cb0a8" hole="#0a6c68" line="#0a3c3c" /></g><path d="M1 1l6 5M13 21l5 2" stroke="#222" /></svg>
        <svg width="14" height="24" viewBox="0 0 15 24"><circle cx="14" cy="12" r="10" fill="#dcdfdc" stroke="#555" /><path d="M6 3h9v12z" fill="#9cd848" stroke="#444" /><path d="M2 2l12 14" stroke="#222" /></svg>
      </div>
    </div>
  );
}

/* ---------- canvas (origin at 555,146) ---------- */

type P = [number, number];
const s = (a: P, b: P, h: number) => `M${a[0]} ${a[1]}C${a[0] + h} ${a[1]} ${b[0] - h} ${b[1]} ${b[0]} ${b[1]}`;

const SINGLE = [
  "M849.5 140C848 230 850 275 922 275",
  s([572, 381], [922, 322], 160),
  s([1040, 310.7], [1226, 340], 82),
  "M1040 310.7C1115 310 1138 262 1138.5 140",
  s([799, 479], [922, 346], 82),
  "M818 648C1036 648 712 346 922 346",
  s([665, 611.5], [708, 601], 20),
  s([669, 723.5], [708, 719], 18),
  s([895, 728], [987, 655], 52),
  s([908, 787], [987, 678.5], 72),
  s([832, 847], [892, 847], 20),
  s([844, 894], [892, 870.5], 22),
];
const DOUBLE = [
  s([572, 172], [922, 322], 165),
  s([1337, 408], [1454, 480], 54),
  s([1337, 431.5], [1454, 557], 74),
  "M972 847C1070 847 896 702 987 702",
];
const DASHED = [
  s([1339, 337], [1405, 331.5], 25),
  s([1490, 308], [1649, 181.5], 92),
  s([1490, 331.5], [1649, 307], 70),
  s([1490, 355], [1656, 429], 80),
];
const PORTS: P[] = [
  [570, 172], [569, 381],
  [924, 275], [924, 298.5], [924, 322], [924, 346], [1038, 310.7],
  [705, 443.5], [705, 467], [705, 490.5], [705, 514], [797, 479],
  [710, 577.5], [710, 601], [710, 625], [710, 648], [710, 672], [710, 695], [710, 719], [817, 648],
  [611, 611.5], [663, 611.5], [666, 723.5],
  [857, 728], [893, 728], [870, 787], [906, 787], [779, 847], [831, 847], [799, 894], [843, 894],
  [894, 823.5], [894, 847], [894, 870.5], [971, 847],
  [990, 655], [990, 678.5], [990, 702], [1285, 678.5],
  [1238, 151], [1345, 153],
  [1229, 340], [1229, 369.5], [1229, 399], [1229, 428.5],
  [1335, 337.5], [1335, 361], [1335, 384.5], [1335, 408], [1335, 431.5],
  [1409, 331.5], [1486, 308], [1486, 331.5], [1486, 355],
  [1456, 479], [1456, 557], [1456, 634],
  [1652, 181.5], [1652, 307], [1659, 429],
];

const BODY =
  "absolute rounded-[4px] border border-[#3a3a3e] bg-[linear-gradient(to_bottom,#f4f4f4_0,#f0f0f0_3px,#dcdce0_4px,#d4d0c8_5px,#d4d0c8_8px,#aeaeb0_9px,#aeaeb0_36%,#9799a6_36%,#9799a6_85.5%,#8c8c96_85.5%)]";

const Rows = ({ items, className = "" }: { items: ReactNode[]; className?: string }) => (
  <div className={`flex flex-col ${className}`}>
    {items.map((t, i) => <div key={i} className="h-[23.5px] leading-[23px]">{t}</div>)}
  </div>
);

const Caption = ({ children }: { children: ReactNode }) => (
  <div className="flex h-[18px] items-center gap-[6px] text-[9.5px] leading-none text-[#222]">
    <span className="h-px flex-1 bg-[#2f74bc]" /><span className="whitespace-nowrap tracking-[-0.1px]">{children}</span><span className="h-px flex-1 bg-[#2f74bc]" />
  </div>
);

const Select = ({ children }: { children: ReactNode }) => (
  <div className="ml-[4px] mr-[6px] flex h-[19px] items-center justify-between border-[1.5px] border-[#2f7cc4] bg-[#efefef] pl-[1px] pr-[4px] text-[11.5px] leading-none text-black">
    <span className="whitespace-nowrap pb-px">{children}</span>
    <svg width="9" height="6" viewBox="0 0 9 6" fill="none" stroke="#2f7cc4"><path d="M.5.8l4 4 4-4" /></svg>
  </div>
);

const Note = ({ className, children }: { className: string; children: ReactNode }) => (
  <div className={`absolute h-[25px] rounded-[4px] border border-[#3c3c28] bg-[#f6f058] pl-[9px] pt-[3px] font-['Liberation_Mono',monospace] text-[12px] leading-[14px] text-[#3a3a10] ${className}`}>{children}</div>
);

const DataPanel = ({ className, header }: { className: string; header?: boolean }) => (
  <div className={`absolute w-[120px] overflow-hidden rounded-[4px] border border-[#4a4a30] bg-[#f6f058] font-['Liberation_Mono',monospace] text-[12px] text-[#34340c] ${className}`}>
    {header && <div className="mt-px h-[20px] bg-[#d8d04c]" />}
    {[0, 1, 2, 3, 4].map((n) => (
      <div key={n} className="flex h-[18.75px] items-center pl-[5px] leading-none">
        <span className="w-[11px]">{n}</span>
        <span className={`h-full w-px ${n % 2 ? "bg-[#f2d030]" : ""}`} />
        <span className="pl-[3px]">0</span>
      </div>
    ))}
  </div>
);

const LEGEND: [string, string, string][] = [
  ["-107", "bg-[#001bd4]", "text-[#c8d0ff]"], ["-86.7", "bg-[#006be4]", "text-[#a8e4ff]"], ["-66.2", "bg-[#66deb2]", "text-[#0c3c28]"],
  ["-45.8", "bg-[#cff96f]", "text-[#1c4410]"], ["-25.4", "bg-[#ffd548]", "text-[#3c2404]"], ["-4.93", "bg-[#fc7744]", "text-[#3c0c04]"],
  ["15.5", "bg-[#d40f46]", "text-[#ff9cc8]"],
];

const STRIPES: [string, number, number][] = [
  ["#0000a8", 1275, 1275], ["#001bd4", 1255, 1228], ["#006be4", 1203, 1182], ["#0684e4", 1130, 1112], ["#1291da", 1100, 1090],
  ["#30adce", 1073, 1074], ["#46c8c4", 1045, 1060], ["#66deb2", 1028, 1008], ["#8eeb94", 938, 952], ["#adf188", 922, 936], ["#cff96f", 900, 920],
  ["#f6f058", 812, 842], ["#ffd548", 765, 802], ["#ffae47", 697, 728], ["#ff8b47", 672, 692], ["#fc7744", 630, 648], ["#ec4f46", 585, 612],
  ["#d40f46", 565, 588], ["#a2062b", 518, 556],
];
const KNOBS = [501, 626, 738, 869, 989, 1130, 1272];

function GradientStrip() {
  return (
    <svg width="260" height="70" viewBox="500 71 780 210" preserveAspectRatio="none" className="absolute left-[26px] top-[2px] overflow-visible">
      {STRIPES.map(([c, mid, end]) => (
        <path key={c} fill={c} d={`M501 72H${end}Q${mid} 82 ${mid} 106V244Q${mid} 268 ${end} 278H501Z`} />
      ))}
      <rect x="502" y="73" width="773" height="205" fill="none" stroke="#1a1010" strokeWidth="3" />
      <path d="M502 73H543A42 42 0 0 1 502 114Z" fill="#7cc840" stroke="#111" strokeWidth="4" />
      <path d="M504 75H538L516 100Z" fill="#f4d030" />
      <path d="M512 75H540L530 92Z" fill="#f07020" />
      <path d="M501 173H1272" stroke="#3a3a3a" strokeWidth="3" opacity=".6" />
      <path d="M501 177.500H1272" stroke="#e8e0e0" strokeWidth="2.500" opacity=".8" />
      {KNOBS.map((x) => <circle key={x} cx={x} cy="176" r="11" fill="#fff" stroke="#0a0a0a" strokeWidth="6" />)}
    </svg>
  );
}

const zig = (() => {
  let d = "M4 .5H146L151.500 5";
  for (let i = 0; i < 48; i++) d += `L${i % 2 ? 151.5 : 147} ${(5 + (i + 1) * 4.72).toFixed(1)}`;
  return d + "L146 236.500H4Q.500 236.500.500 233V4Q.500.500 4 .500Z";
})();

function Canvas() {
  return (
    <div className="relative min-h-0 flex-1 overflow-hidden border-l border-[#77777a] bg-[#d4d0c8] font-['Open_Sans','Noto_Sans',sans-serif] text-[12px] text-[#111]">
      <div className="absolute -left-[556px] -top-[146px] h-[921px] w-[1746px]">
        <svg width="1746" height="921" className="absolute left-0 top-0" fill="none">
          <g stroke="#a9a9ac">
            {[620.5, 797.5, 973.5, 1150.5, 1326.5, 1503.5, 1679.5].map((x) => <path key={x} d={`M${x} 146V921`} />)}
            {[151.5, 210.5, 269.5, 328.5, 386.5, 445.5, 504.5, 563.5, 622.5, 681.5, 739.5, 798.5, 857.5, 916.5].map((y) => <path key={y} d={`M555 ${y}H1746`} />)}
          </g>
          <g stroke="#505050">
            {SINGLE.map((d, i) => <path key={i} d={d} strokeWidth="3.300" />)}
            {DOUBLE.map((d, i) => <path key={i} d={d} strokeWidth="5.600" />)}
            {DASHED.map((d, i) => <path key={i} d={d} strokeWidth="5.600" strokeLinecap="round" strokeDasharray="10.5 10.5" />)}
          </g>
          <g stroke="#cac7c0" strokeWidth="1.900">
            {DOUBLE.map((d, i) => <path key={i} d={d} />)}
            {DASHED.map((d, i) => <path key={i} d={d} strokeLinecap="round" strokeDasharray="10.5 10.5" />)}
          </g>
          {PORTS.map(([x, y], i) => <circle key={i} cx={x} cy={y} r="4.600" fill="#fff" stroke="#0a0a0a" strokeWidth="2.200" />)}
        </svg>

        <div className="absolute left-[500px] top-[100px] h-[194px] w-[70px] rounded-[4px] border border-[#55555a] bg-[#d4d0c8]">
          <div className="h-[60px] bg-[#efefef]" />
          <div className="mt-[67px] h-px bg-[#2f74bc]" />
          <div className="mr-[2px] mt-[9px] h-[20px] border border-[#6fa0d0]" />
          <div className="pr-[4px] text-right text-[11px] leading-[14px]">cz</div>
          <div className="ml-auto mr-[4px] mt-[4px] flex h-[11px] w-[12px] items-center justify-center bg-[#0c5cb0]"><svg width="9" height="8" viewBox="0 0 9 8" fill="none" stroke="#fff"><path d="M1 4l2.500 3L8 .5" /></svg></div>
        </div>
        <div className={`${BODY} left-[500px] top-[320px] h-[123px] w-[69px]`} />

        <div className={`${BODY} left-[924px] top-[261px] flex h-[99px] w-[114px] pt-[2px]`}>
          <Rows className="w-[35px] text-right" items={["GSA", "Prob", "Geo", "Load"]} />
          <svg width="24" height="24" viewBox="0 0 24 24" fill="none" stroke="#55534f" className="ml-[9px] mt-[34px]"><rect x="1.500" y="1.500" width="21" height="21" rx="1" strokeWidth="2" /><path d="M17 9V6.500H7.500L13 12l-5.500 6H17v-2.500" strokeWidth="2.400" /></svg>
          <span className="ml-[7px] mt-[35px] leading-[24px]">GSA</span>
        </div>

        <div className={`${BODY} left-[705px] top-[429px] flex h-[99px] w-[92px] pt-[2px]`}>
          <Rows className="w-[24px] text-right" items={["LC", "El", "Na", "G"]} />
          <svg width="24" height="26" viewBox="0 0 24 26" className="ml-[7px] mt-[33px]"><path d="M0 8h24M12 12v6" stroke="#4c4c4c" strokeWidth="2.600" /><circle cx="12" cy="8" r="5.500" fill="#14988a" stroke="#4c4c4c" strokeWidth="2.400" /><circle cx="11.500" cy="7" r="1.800" fill="#e8fffc" /><path d="M7 17h10l-5 8.500z" fill="#4c4c4c" /></svg>
          <span className="ml-[9px] mt-[35px] leading-[24px]">Ld</span>
        </div>

        <div className={`${BODY} left-[710px] top-[563px] h-[209px] w-[107px] pt-[2px]`}>
          <div className="flex h-[164px]">
            <Rows className="w-[24px] text-right" items={["LC", "El", "Na", "Ax", "Di", "Pj", "V"]} />
            <svg width="20" height="22" viewBox="0 0 20 22" className="ml-[17px] mt-[70px]"><rect x="2" y="3.500" width="16" height="16" fill="#d4d0c8" stroke="#1263b4" strokeWidth="2.200" /><path d="M7.500 0h5v7H15.500L10 15 4.500 7h3z" fill="#4c4c4c" /></svg>
            <span className="ml-[17px] mt-[70px] leading-[24px]">Ld</span>
          </div>
          <div className="pb-px"><Caption>Load Type</Caption></div>
          <Select>Uniform</Select>
        </div>

        <Note className="left-[611px] top-[599px] w-[52px]">all</Note>
        <Note className="left-[857px] top-[716px] w-[36px]">0</Note>
        <Note className="left-[870px] top-[775px] w-[36px]">1</Note>
        <Note className="left-[779px] top-[835px] w-[52px]">0.1</Note>
        <Note className="left-[799px] top-[882px] w-[44px]">11</Note>

        <div className="absolute left-[500px] top-[711px] flex h-[25px] w-[166px] items-center rounded-[4px] border border-[#55555a] bg-linear-to-b from-[#f0f0f0] from-30% to-[#d8d4cc] to-40% pl-[77px]">
          <span className="leading-none">5</span>
          <svg width="70" height="12" viewBox="0 0 70 12" fill="none" className="ml-[4px]"><path d="M16 6H67V1M24 6v-1.500M38 6v-1.500M52 6v-1.500" stroke="#b4b0a8" strokeWidth=".7" /><path d="M6 2.500l3.800 3.800L6 10 2.200 6.300z" fill="#fff" stroke="#000" strokeWidth="1.500" /></svg>
        </div>

        <div className={`${BODY} left-[893px] top-[809px] flex h-[76px] w-[78px] pt-[2px]`}>
          <Rows className="ml-[6px] w-[14px] text-center" items={["S", "N", "C"]} />
          <svg width="26" height="26" viewBox="0 0 26 26" className="ml-[4px] mt-[21px] font-['Liberation_Sans',sans-serif]" fontSize="10" textAnchor="middle" fontWeight="bold">
            <rect x="14.500" y="1.500" width="10" height="12" fill="#b4b4b6" stroke="#666" /><text x="20.300" y="11" fill="#666">2</text>
            <rect x="8.500" y="6.500" width="9.500" height="12" fill="#e4e4e4" stroke="#333" /><text x="14.300" y="16.200" fill="#222">1</text>
            <rect x="1" y="12.500" width="10" height="12" fill="#fff" stroke="#111" strokeWidth="1.300" /><text x="6" y="22.200" fill="#111">0</text>
          </svg>
          <span className="ml-[7px] mt-[22px] leading-[24px]">S</span>
        </div>

        <div className={`${BODY} left-[990px] top-[641px] h-[76px] w-[295px] pt-[2px]`}>
          <Rows className="w-[21px] text-right" items={["L0", "L1", "t"]} />
          <GradientStrip />
        </div>

        <div className="absolute left-[1238px] top-[130px] h-[115px] w-[107px] rounded-[4px] border border-[#2c2c30] bg-[#d4d0c8]">
          <div className="flex h-[34px] justify-between border-x-2 border-[#f4f4f4] pl-[15px] pr-[13px] pt-[16px] leading-[12px]"><span>x:X</span><span className="pt-px">LT</span></div>
          <Caption>Result Type</Caption>
          <Select>Reaction</Select>
          <div className="pt-[2px]"><Caption>Display Result</Caption></div>
          <Select>Resolved |F|</Select>
        </div>

        <div className="absolute left-[1229px] top-[323px] h-[201px] w-[107px] rounded-[4px] border border-[#3a3a3e] bg-[#d4d0c8]">
          <div className="flex h-[120px] rounded-t-[3px] border-x border-[#f4f4f4] bg-linear-to-b from-[#f0f0f0] from-[43px] to-[#d4d0c8] to-[43px] pt-px">
            <div className="w-[31px] text-right">{["GSA", "LC", "El", "Co"].map((t) => <div key={t} className="h-[29.5px] leading-[31px]">{t}</div>)}</div>
            <svg width="28" height="28" viewBox="0 0 28 28" className="ml-[8px] mt-[45px]"><g transform="translate(-2.800 -2.800) scale(1.200)"><Contour /></g></svg>
            <Rows className="ml-[10px]" items={[
              <span className="relative">F<i className="absolute left-[1px] top-[-1px] h-px w-[6px] bg-black" /></span>,
              <span className="relative">M<i className="absolute left-[3px] top-[-1px] h-px w-[6px] bg-black" /></span>,
              "M", "LC", "LT",
            ]} />
          </div>
          <Caption>Result Type</Caption>
          <Select>Force/Mome...</Select>
          <div className="pt-[2px]"><Caption>Display Result</Caption></div>
          <Select>Moment Mxy</Select>
        </div>

        <div className={`${BODY} left-[1409px] top-[294px] flex h-[76px] w-[77px] pt-[2px]`}>
          <span className="ml-[8px] mt-[23px] leading-[24px]">V</span>
          <svg width="26" height="26" viewBox="0 0 26 26" className="ml-[6px] mt-[22px] font-['Liberation_Sans',sans-serif]" fontSize="10" fill="#2a2a2a"><path d="M5 4h10" stroke="#8c1014" strokeWidth="3" /><path d="M14 .5l8 3.500-8 3.500z" fill="#8c1014" /><circle cx="5" cy="4" r="2" fill="#fff" stroke="#222" /><path d="M8 9l-3 5M12.500 8v6M16 9l4 5" stroke="#555" strokeWidth="1.300" /><text x="1" y="24">X</text><text x="9.500" y="24">Y</text><text x="18.500" y="24">Z</text></svg>
          <Rows className="ml-[6px] w-[14px] text-center" items={["X", "Y", "Z"]} />
        </div>

        <div className="absolute left-[1456px] top-[438px] h-[237px] w-[152px]">
          <svg width="153" height="238" viewBox="0 0 153 238" className="absolute left-0 top-0">
            <defs>
              <linearGradient id="lg" x1="0" y1="0" x2="0" y2="1">
                <stop offset="0" stopColor="#f4f4f4" /><stop offset=".02" stopColor="#e4e4e8" /><stop offset=".021" stopColor="#d4d0c8" /><stop offset=".038" stopColor="#d4d0c8" />
                <stop offset=".04" stopColor="#aeaeb0" /><stop offset=".36" stopColor="#aeaeb0" /><stop offset=".36" stopColor="#9799a6" /><stop offset=".86" stopColor="#9799a6" /><stop offset=".86" stopColor="#8c8c96" /><stop offset="1" stopColor="#8c8c96" />
              </linearGradient>
            </defs>
            <path d={zig} fill="url(#lg)" stroke="#3a3a3e" />
          </svg>
          <div className="relative flex h-full pt-[7px]">
            <div className="w-[24px] pl-[3px] text-center">
              {["C", "T", "R"].map((t) => <div key={t} className="h-[77.3px] leading-[70px]">{t}</div>)}
            </div>
            <div className="flex h-[224px] w-[117px] flex-col gap-px border border-black bg-black p-px">
              {LEGEND.map(([t, bg, fg]) => (
                <div key={t} className={`flex flex-1 items-center border border-white pl-[6px] text-[12px] leading-none ${bg} ${fg}`}>{t}</div>
              ))}
            </div>
          </div>
        </div>

        <DataPanel className="left-[1652px] top-[142px] h-[98px]" />
        <DataPanel className="left-[1652px] top-[248px] h-[118px]" header />
        <DataPanel className="left-[1659px] top-[370px] h-[119px]" header />

        <svg width="12" height="20" viewBox="0 0 12 20" className="absolute left-[1569px] top-[873px]"><path d="M.7.900V15.500l3.300-3 2.300 5.500 2.400-1-2.300-5.300h4.400z" fill="#fff" stroke="#111" /></svg>
      </div>
    </div>
  );
}

export default function App() {
  return (
    <div className="flex h-[921px] w-[1746px] overflow-hidden bg-[#efefef]">
      <Viewport />
      <div className="flex min-w-0 flex-1 flex-col">
        <Ribbon />
        <Toolbar />
        <Canvas />
      </div>
    </div>
  );
}
